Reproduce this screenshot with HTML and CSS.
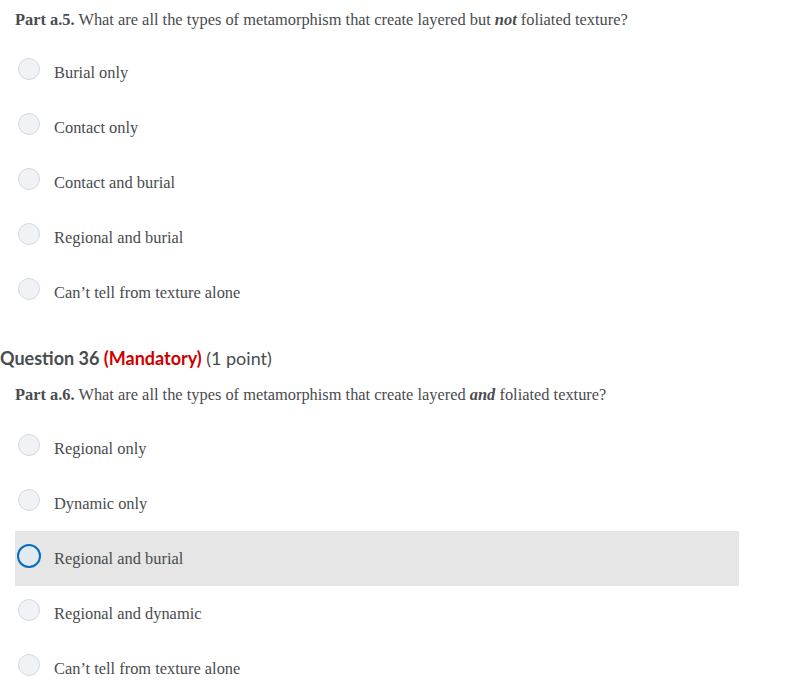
FILE: index.html
```html
<!DOCTYPE html>
<html>
<head>
<meta charset="utf-8">
<link rel="stylesheet" href="styles.css">
</head>
<body>
<div class="page">
  <section class="question first">
    <p class="prompt"><b>Part a.5.</b> What are all the types of metamorphism that create layered but <b><i>not</i></b> foliated texture?</p>
    <ul class="options">
      <li class="option"><span class="radio"></span><span class="label">Burial only</span></li>
      <li class="option"><span class="radio"></span><span class="label">Contact only</span></li>
      <li class="option"><span class="radio"></span><span class="label">Contact and burial</span></li>
      <li class="option"><span class="radio"></span><span class="label">Regional and burial</span></li>
      <li class="option"><span class="radio"></span><span class="label">Can’t tell from texture alone</span></li>
    </ul>
  </section>
  <h2 class="qhead">Question 36 <span class="mand">(Mandatory)</span> <span class="pts">(1 point)</span></h2>
  <section class="question">
    <p class="prompt"><b>Part a.6.</b> What are all the types of metamorphism that create layered <b><i>and</i></b> foliated texture?</p>
    <ul class="options">
      <li class="option"><span class="radio"></span><span class="label">Regional only</span></li>
      <li class="option"><span class="radio"></span><span class="label">Dynamic only</span></li>
      <li class="option hover"><span class="radio focus"></span><span class="label">Regional and burial</span></li>
      <li class="option"><span class="radio"></span><span class="label">Regional and dynamic</span></li>
      <li class="option"><span class="radio"></span><span class="label">Can’t tell from texture alone</span></li>
    </ul>
  </section>
</div>
</body>
</html>
```
FILE: styles.css
```css
* { box-sizing: border-box; }
body {
  margin: 0;
  background: #fff;
  color: #494c4e;
  font-family: "Liberation Serif", "Times New Roman", serif;
}
.page { width: 795px; }
.question { padding-left: 15px; }
.question.first { padding-top: 10px; }
.prompt {
  margin: 0;
  font-size: 16.4px;
  line-height: 20px;
}
.options {
  list-style: none;
  margin: 15px 0 0;
  padding: 0;
  width: 724px;
}
.qhead + .question .options { margin-top: 16px; }
.option {
  height: 55px;
  display: flex;
  align-items: center;
  padding-left: 3px;
  font-size: 16.4px;
}
.option.hover { background: #e6e6e6; }
.radio {
  width: 22px;
  height: 22px;
  border-radius: 50%;
  border: 1px solid #d3d9e3;
  background: #f1f2f5;
  margin-right: 14px;
  margin-top: -8px;
  flex: none;
}
.radio.focus {
  width: 24px;
  height: 24px;
  border: 2px solid #006fbf;
  background: #e3e9f1;
  margin: -5px 13px 0 -1px;
}
.label { line-height: 20px; }
.qhead {
  margin: 26px 0 15px;
  font-family: Lato, "Liberation Sans", sans-serif;
  font-size: 18px;
  line-height: 24px;
  font-weight: 700;
  color: #494c4e;
}
.mand { color: #cd0000; }
.pts { font-weight: 400; }
```
